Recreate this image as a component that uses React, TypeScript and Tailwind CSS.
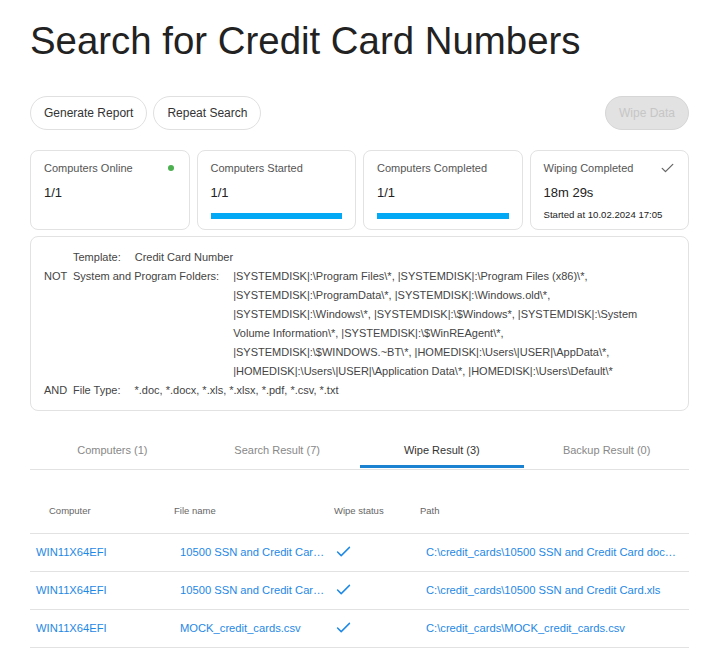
import React from "react";

const Check = ({ className }: { className?: string }) => (
  <svg viewBox="0 0 16 12" className={className} fill="none" stroke="currentColor" strokeWidth={1.6} strokeLinecap="round" strokeLinejoin="round">
    <path d="M1.5 6.5 L5.5 10.5 L14.5 1.5" />
  </svg>
);

const rows = [
  { c: "WIN11X64EFI", f: "10500 SSN and Credit Card document.docx", p: "C:\\credit_cards\\10500 SSN and Credit Card document.docx" },
  { c: "WIN11X64EFI", f: "10500 SSN and Credit Card.xls", p: "C:\\credit_cards\\10500 SSN and Credit Card.xls" },
  { c: "WIN11X64EFI", f: "MOCK_credit_cards.csv", p: "C:\\credit_cards\\MOCK_credit_cards.csv" },
];

export default function App() {
  return (
    <div className="bg-white pl-[30px] pr-[20px] pt-[18px] pb-4 w-[709px] text-[#333]" style={{ fontFamily: '"Liberation Sans", Arial, sans-serif' }}>
      <h1 className="text-[38.4px] leading-[46px] text-[#222] font-normal">Search for Credit Card Numbers</h1>

      <div className="flex items-center mt-[32px] h-[34px]">
        <button className="h-[34px] px-[13px] rounded-full border border-[#e0e0e0] text-[12px] text-[#333] bg-white">Generate Report</button>
        <button className="ml-[6px] h-[34px] px-[13px] rounded-full border border-[#e0e0e0] text-[12px] text-[#333] bg-white">Repeat Search</button>
        <button className="ml-auto h-[34px] px-[13px] rounded-full border border-[#d6d6d6] text-[12px] text-[#c6c6c6] bg-[#e2e2e2]">Wipe Data</button>
      </div>

      <div className="grid grid-cols-4 gap-[7px] mt-[20px]">
        <div className="h-[80px] rounded-[8px] border border-[#e2e2e2] px-[13px] pt-[9px]">
          <div className="flex items-center justify-between text-[11px] text-[#555] leading-[16px]">
            <span>Computers Online</span>
            <span className="w-[6px] h-[6px] rounded-full bg-[#4caf50] mr-[2px]" />
          </div>
          <div className="text-[13px] text-[#222] mt-[8px] leading-[18px]">1/1</div>
        </div>
        <div className="h-[80px] rounded-[8px] border border-[#e2e2e2] px-[13px] pt-[9px]">
          <div className="text-[11px] text-[#555] leading-[16px]">Computers Started</div>
          <div className="text-[13px] text-[#222] mt-[8px] leading-[18px]">1/1</div>
          <div className="h-[6px] bg-[#03a9f4] mt-[11px]" />
        </div>
        <div className="h-[80px] rounded-[8px] border border-[#e2e2e2] px-[13px] pt-[9px]">
          <div className="text-[11px] text-[#555] leading-[16px]">Computers Completed</div>
          <div className="text-[13px] text-[#222] mt-[8px] leading-[18px]">1/1</div>
          <div className="h-[6px] bg-[#03a9f4] mt-[11px]" />
        </div>
        <div className="h-[80px] rounded-[8px] border border-[#e2e2e2] px-[13px] pt-[9px]">
          <div className="flex items-center justify-between text-[11px] text-[#555] leading-[16px]">
            <span>Wiping Completed</span>
            <Check className="w-[13px] h-[10px] text-[#666] mr-[1px]" />
          </div>
          <div className="text-[13px] text-[#222] mt-[8px] leading-[18px]">18m 29s</div>
          <div className="text-[9.6px] text-[#222] mt-[6px] leading-[13px]">Started at 10.02.2024 17:05</div>
        </div>
      </div>

      <div className="mt-[6px] rounded-[8px] border border-[#e2e2e2] pl-[13px] pr-[14px] pt-[11px] pb-[10px] text-[11px] leading-[19px] text-[#444]">
        <div className="flex">
          <span className="w-[29px] shrink-0" />
          <span className="whitespace-nowrap">Template:</span>
          <span className="ml-[14px]">Credit Card Number</span>
        </div>
        <div className="flex">
          <span className="w-[29px] shrink-0">NOT</span>
          <span className="whitespace-nowrap">System and Program Folders:</span>
          <span className="ml-[14px] w-[412px]">
            |SYSTEMDISK|:\Program Files\*, |SYSTEMDISK|:\Program Files (x86)\*, |SYSTEMDISK|:\ProgramData\*, |SYSTEMDISK|:\Windows.old\*, |SYSTEMDISK|:\Windows\*, |SYSTEMDISK|:\$Windows*, |SYSTEMDISK|:\System Volume Information\*, |SYSTEMDISK|:\$WinREAgent\*, |SYSTEMDISK|:\$WINDOWS.~BT\*, |HOMEDISK|:\Users\|USER|\AppData\*, |HOMEDISK|:\Users\|USER|\Application Data\*, |HOMEDISK|:\Users\Default\*
          </span>
        </div>
        <div className="flex">
          <span className="w-[29px] shrink-0">AND</span>
          <span className="whitespace-nowrap">File Type:</span>
          <span className="ml-[14px]">*.doc, *.docx, *.xls, *.xlsx, *.pdf, *.csv, *.txt</span>
        </div>
      </div>

      <div className="mt-[24px] grid grid-cols-4 border-b border-[#e2e2e2] text-[11px]">
        {["Computers (1)", "Search Result (7)", "Wipe Result (3)", "Backup Result (0)"].map((t, i) => (
          <div key={t} className={`h-[34px] pb-[4px] flex items-center justify-center relative ${i === 2 ? "text-[#333]" : "text-[#888]"}`}>
            {t}
            {i === 2 && <span className="absolute left-0 right-0 bottom-[1px] h-[3px] bg-[#1a82d0]" />}
          </div>
        ))}
      </div>

      <div className="mt-[30px]">
        <div className="grid grid-cols-[138px_160px_86px_1fr] h-[34px] pb-[10px] items-center border-b border-[#e2e2e2] text-[9.5px] text-[#666]">
          <div className="pl-[19px]">Computer</div>
          <div className="pl-[6px]">File name</div>
          <div className="pl-[6px]">Wipe status</div>
          <div className="pl-[6px]">Path</div>
        </div>
        {rows.map((r, i) => (
          <div key={i} className="grid grid-cols-[138px_160px_86px_1fr] h-[38px] items-center border-b border-[#e2e2e2] text-[11.2px] text-[#1e88e5]">
            <div className="pl-[6px] truncate">{r.c}</div>
            <div className="pl-[12px] pr-[1px] truncate">{r.f}</div>
            <div className="pl-[8px]"><Check className="w-[15px] h-[11px] text-[#1e88e5] -mt-[3px]" /></div>
            <div className="pl-[12px] pr-[10px] truncate">{r.p}</div>
          </div>
        ))}
      </div>
    </div>
  );
}
